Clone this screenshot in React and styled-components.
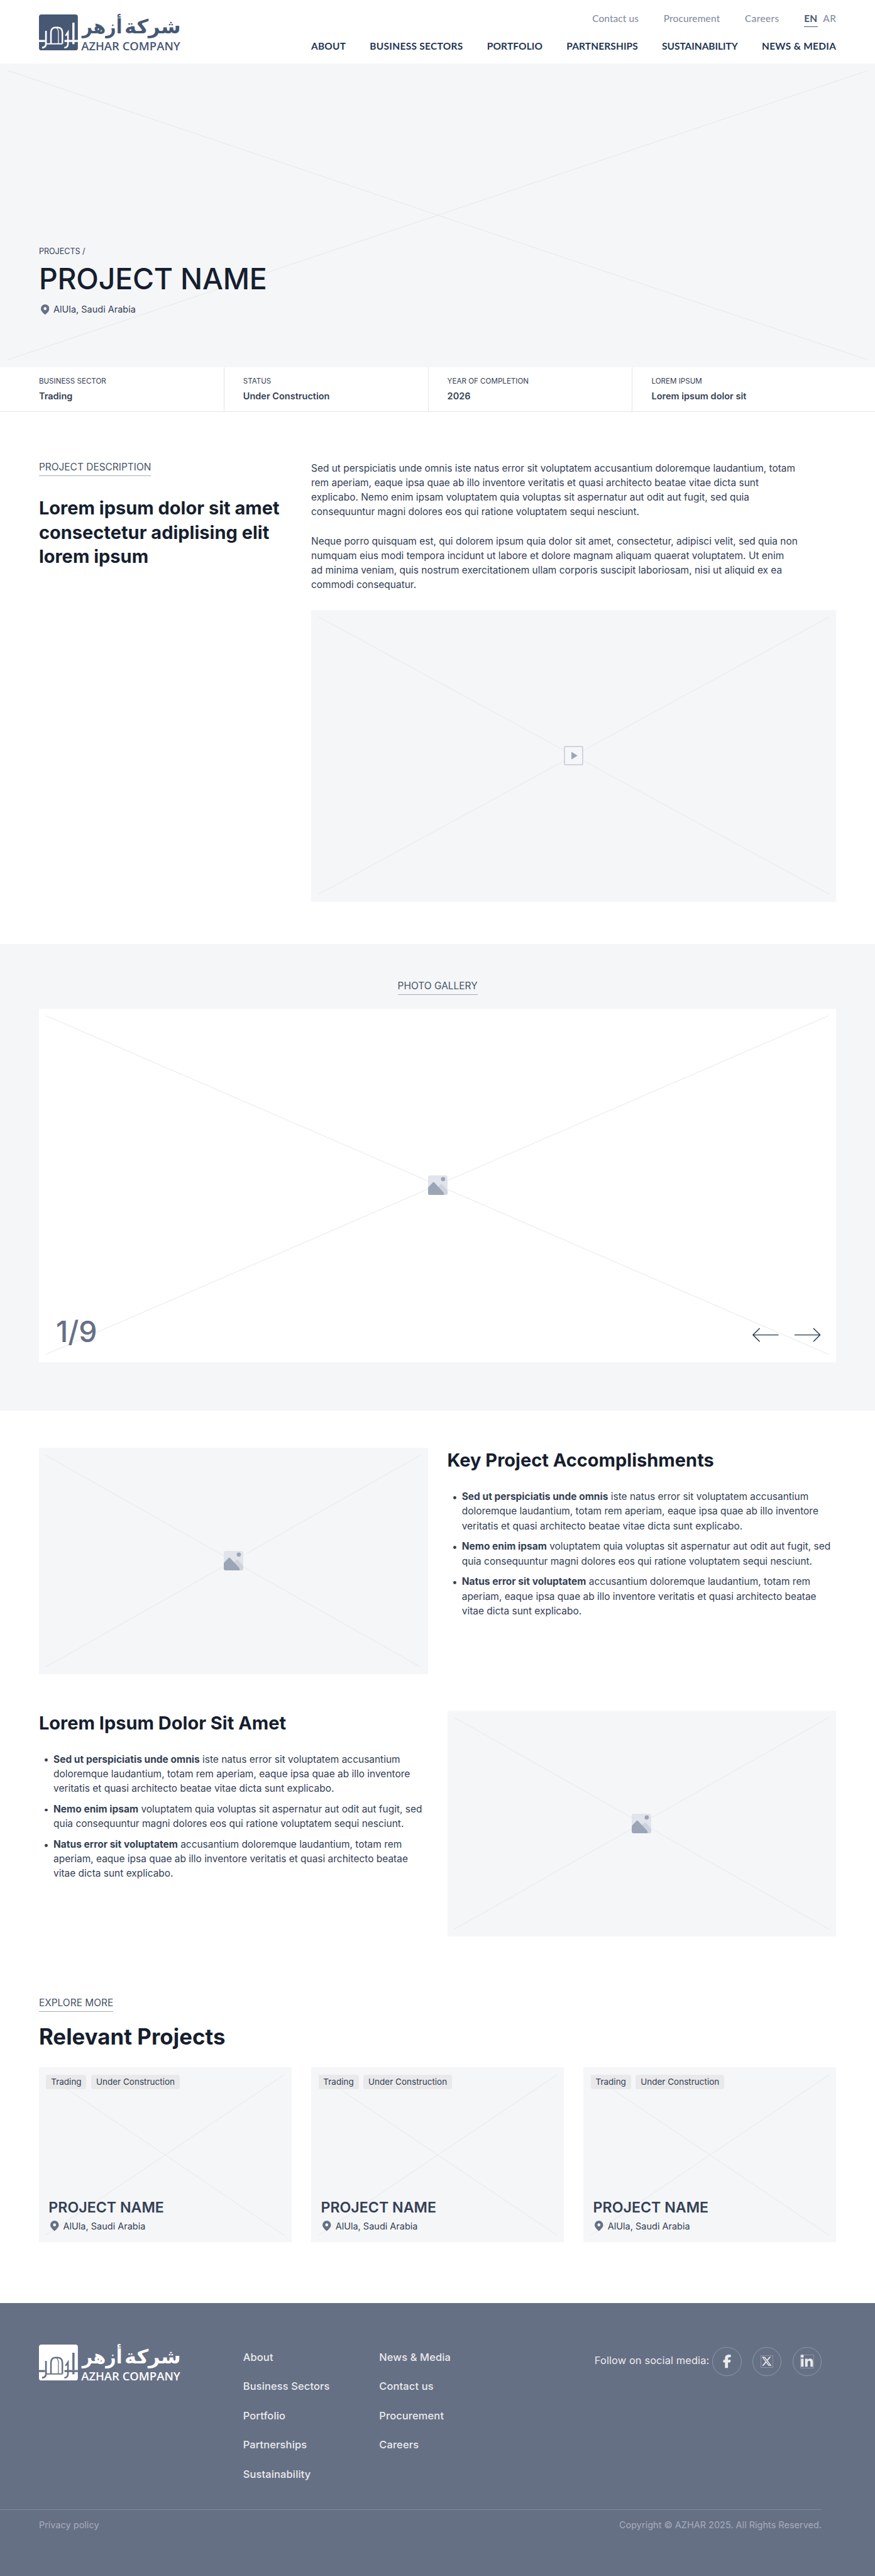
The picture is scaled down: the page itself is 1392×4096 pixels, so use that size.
import React from "react";
import styled, { createGlobalStyle, css } from "styled-components";
import { FaFacebookF, FaLinkedinIn, FaXTwitter } from "react-icons/fa6";

const GlobalStyle = createGlobalStyle`
  *, *::before, *::after { box-sizing: border-box; }
  html, body { overflow: hidden; }
  body { margin: 0; background: #fff; }
  h1, h2, h3, p, ul { margin: 0; padding: 0; }
  ul { list-style: none; }
  a { color: inherit; text-decoration: none; }
`;

/* The page is designed on a 1440px grid. */
const Page = styled.div`
  zoom: 0.9668;
  width: 1440px;
  background: #fff;
  color: #344054;
  font-family: Inter, "Liberation Sans", sans-serif;
  font-size: 16px;
  line-height: 24px;
  white-space: nowrap;
`;

/* Header */
const Header = styled.header`
  display: flex;
  justify-content: space-between;
  height: 104px;
  padding: 24px 64px 0;
`;
const LogoSvg = styled.svg`
  display: block;
  flex: none;
  width: 234px;
  height: 60px;
  overflow: visible;
`;
const ArabicWord = styled.text`
  font-family: "DejaVu Sans", sans-serif;
  font-size: 32px;
  font-weight: 700;
  direction: rtl;
`;
const LatinName = styled.text`
  font-family: "Open Sans", "Noto Sans", sans-serif;
  font-size: 19.1px;
  font-weight: 600;
`;
const Menus = styled.div`
  display: flex;
  flex-direction: column;
  align-items: flex-end;
  font-family: Lato, "Open Sans", sans-serif;
`;
const TopLinks = styled.nav`
  display: flex;
  gap: 41px;
  margin-top: -5px;
  color: #7b879d;
  font-size: 16px;
`;
const Languages = styled.div`
  display: flex;
  gap: 9px;
`;
const TopLink = styled.a`
  letter-spacing: ${(p) => p.$spacing || 0}px;
  ${(p) =>
    p.$active &&
    css`
      height: 25px;
      border-bottom: 1px solid #475874;
      color: #475874;
      font-weight: 700;
    `}
`;
const MainNav = styled.nav`
  display: flex;
  gap: 39.5px;
  margin-top: 20px;
`;
const NavLink = styled.a`
  color: #1f3654;
  font-size: 16px;
  font-weight: 700;
  letter-spacing: ${(p) => p.$spacing || 0}px;
`;

/* Placeholders */
const Frame = styled.div`
  position: relative;
  display: flex;
  align-items: center;
  justify-content: center;
  height: ${(p) => p.$height}px;
  background: ${(p) => (p.$white ? "#fff" : "#f5f6f8")};
`;
const CrossSvg = styled.svg`
  position: absolute;
  top: 12px;
  left: 12px;
  width: calc(100% - 24px);
  height: calc(100% - 24px);
  stroke: ${(p) => (p.$cool ? "#e5e7ec" : "#e6e7e9")};
`;
const Glyph = styled.svg`
  position: relative;
  display: block;
  width: 32px;
  height: 32px;
`;

/* Hero */
const Hero = styled.section`
  position: relative;
  display: flex;
  flex-direction: column;
  justify-content: flex-end;
  height: 500px;
  padding: 0 64px 85px;
  background: #f5f6f8;
`;
const Breadcrumb = styled.div`
  position: relative;
  font-size: 13px;
  line-height: 20px;
`;
const HeroTitle = styled.h1`
  position: relative;
  margin-top: 6px;
  color: #161e2e;
  font-size: 48px;
  font-weight: 500;
  line-height: 58px;
  letter-spacing: -0.2px;
`;
const Location = styled.div`
  position: relative;
  display: flex;
  align-items: center;
  gap: 7px;
  margin-top: ${(p) => p.$top}px;
  padding-left: 3px;
  font-size: 15px;
  line-height: 20px;
`;
const PinSvg = styled.svg`
  width: 14px;
  height: 17px;
`;

/* Facts bar */
const Facts = styled.section`
  display: flex;
  height: 74px;
  padding: 0 64px;
  border-bottom: 1px solid #e3e4e8;
`;
const Fact = styled.div`
  width: 336px;
  padding: 16px 0 0 31px;
  border-left: 1px solid #e3e4e8;
  &:first-child {
    width: 304px;
    padding-left: 0;
    border-left: 0;
  }
`;
const FactLabel = styled.div`
  font-size: 12px;
  line-height: 16px;
`;
const FactValue = styled.div`
  margin-top: 3px;
  font-size: 15px;
  font-weight: 600;
  line-height: 24px;
`;

/* Shared headings */
const SectionLabel = styled.div`
  width: max-content;
  height: 28px;
  border-bottom: 1px solid #a2adc0;
  color: #475467;
  line-height: 26px;
`;
const Heading = styled.h2`
  padding-top: 1px;
  color: #161e2e;
  font-size: ${(p) => (p.$large ? 36 : 30)}px;
  font-weight: 700;
  line-height: ${(p) => (p.$large ? 48 : 40)}px;
`;

/* Description */
const Description = styled.section`
  display: grid;
  grid-template-columns: 448px 864px;
  height: 875px;
  padding: 77px 64px 0;
`;
const Aside = styled.div`
  display: flex;
  flex-direction: column;
  gap: 32px;
`;
const Copy = styled.div`
  padding-top: 3px;
`;
const Paragraph = styled.p`
  margin-bottom: ${(p) => (p.$last ? 29 : 24)}px;
`;

/* Gallery */
const Gallery = styled.section`
  display: flex;
  flex-direction: column;
  align-items: center;
  gap: 23px;
  height: 767px;
  padding: 55px 64px 0;
  background: #f5f6f8;
`;
const Slide = styled.div`
  position: relative;
  width: 100%;
`;
const Counter = styled.div`
  position: absolute;
  left: 28px;
  bottom: 21px;
  color: #667085;
  font-size: 48px;
  font-weight: 500;
  line-height: 58px;
`;
const Arrows = styled.div`
  position: absolute;
  right: 26px;
  bottom: 32px;
  display: flex;
  gap: 26px;
`;
const ArrowSvg = styled.svg`
  width: 43px;
  height: 24px;
  fill: none;
  stroke: #22394a;
  stroke-width: 1.5;
  transform: ${(p) => (p.$flip ? "scaleX(-1)" : "none")};
`;

/* Highlights */
const Highlights = styled.section`
  display: flex;
  flex-direction: column;
  gap: 60px;
  padding: 61px 64px 0;
`;
const HighlightRow = styled.div`
  display: grid;
  grid-template-columns: 640px 640px;
  gap: 32px;
`;
const Bullets = styled.ul`
  display: flex;
  flex-direction: column;
  gap: 10px;
  margin-top: 27.5px;
`;
const Bullet = styled.li`
  display: flex;
  padding-left: 9px;
  &::before {
    content: "";
    flex: none;
    width: 5px;
    height: 5px;
    margin: 11px 9.5px 0 0.5px;
    border-radius: 50%;
    background: #344054;
  }
`;
const Strong = styled.strong`
  font-weight: 700;
  letter-spacing: 0.03px;
`;

/* Related projects */
const Related = styled.section`
  padding: 96px 64px 100px;
`;
const RelatedTitle = styled(Heading)`
  margin: 16px 0 26px;
  letter-spacing: 0.05px;
`;
const Cards = styled.div`
  display: grid;
  grid-template-columns: repeat(3, 416px);
  gap: 32px;
`;
const Card = styled.article`
  position: relative;
  display: flex;
  flex-direction: column;
  justify-content: space-between;
  height: 288px;
  padding: 12px 12px 17px;
  background: #f5f6f8;
`;
const Tags = styled.div`
  position: relative;
  display: flex;
  gap: 8px;
`;
const Tag = styled.span`
  padding: 0 8px;
  border-radius: 4px;
  background: #e9e9ea;
  font-size: 14px;
`;
const CardBody = styled.div`
  position: relative;
  padding-left: 4px;
`;
const CardTitle = styled.h3`
  font-size: 24px;
  font-weight: 600;
  line-height: 32px;
`;

/* Footer */
const FooterArea = styled.footer`
  height: 450px;
  background: #667085;
  color: #ebebec;
`;
const FooterTop = styled.div`
  display: flex;
  height: 339px;
  padding: 68px 88px 0 64px;
`;
const FooterLogo = styled.div`
  width: 336px;
`;
const FooterColumn = styled.nav`
  display: flex;
  flex-direction: column;
  gap: 24px;
  width: 224px;
  padding-top: 9.5px;
  font-size: 17px;
  font-weight: 500;
  letter-spacing: 0.15px;
`;
const Social = styled.div`
  display: flex;
  align-items: center;
  gap: 18px;
  height: 48px;
  margin: 4px 0 0 auto;
`;
const SocialLabel = styled.span`
  margin-right: -13px;
  padding-bottom: 2px;
  font-size: 17px;
  letter-spacing: 0.1px;
`;
const SocialLink = styled.a`
  display: flex;
  align-items: center;
  justify-content: center;
  width: 48px;
  height: 48px;
  border: 1px solid #8f98a8;
  border-radius: 50%;
  font-size: ${(p) => p.$size}px;
`;
const IconTile = styled.span`
  display: flex;
  align-items: center;
  justify-content: center;
  width: ${(p) => p.$size}px;
  height: ${(p) => p.$size}px;
  border: 1px solid rgba(255, 255, 255, 0.25);
`;
const FooterBottom = styled.div`
  display: flex;
  justify-content: space-between;
  width: 1352px;
  padding: 13px 0 0 64px;
  border-top: 1px solid #818a9c;
  color: #a5adbc;
  font-size: 15px;
`;

function Logo({ color, cut }) {
  return (
    <LogoSvg viewBox="0 0 234 60" fill={color}>
      <rect width="64" height="59" rx="4" />
      <g fill="none" stroke={cut}>
        <path d="M0 43.500h10M42 43.500h22" strokeWidth="3.4" />
        <path d="M11.500 27v21q0 6-6.500 6.700" strokeWidth="2.8" />
        <path d="M19.700 48V30q0-8 7-8.500h4.500q7.300.500 7.300 8.500v18" strokeWidth="2.6" />
        <path d="M29 22.500q3 2 3 7V48" strokeWidth="1.300" />
        <path d="M11.500 48.300h27" strokeWidth="2" />
        <path d="M43.700 35l4-6v19q0 6-6 6.700" strokeWidth="2.600" />
        <path d="M56.700 13.500V42M56.700 45v4" strokeWidth="3.600" />
      </g>
      <ArabicWord transform="translate(233.500 31) scale(1.04 1)">شركة</ArabicWord>
      <ArabicWord transform="translate(137 31) scale(0.920 1)">أزهر</ArabicWord>
      <LatinName x="69.500" y="59">
        AZHAR COMPANY
      </LatinName>
    </LogoSvg>
  );
}

function Cross({ cool }) {
  return (
    <CrossSvg $cool={cool}>
      <line x1="0" y1="0" x2="100%" y2="100%" />
      <line x1="0" y1="100%" x2="100%" y2="0" />
    </CrossSvg>
  );
}

function PictureIcon() {
  return (
    <Glyph viewBox="0 0 32 32">
      <rect width="32" height="32" rx="3" fill="#e1e4ea" />
      <path d="M17 19 20.500 15q1.500-1.500 3 0L32 24.500V29a3 3 0 0 1-3 3H24z" fill="#cfd3dd" />
      <path d="M0 20 8 11.500q1-1 2 0L25 27.500q1.200 1.500 1.200 4.500H3a3 3 0 0 1-3-3z" fill="#9ba5b7" />
      <circle cx="24.700" cy="6" r="3.500" fill="#9ba5b7" />
    </Glyph>
  );
}

function VideoIcon() {
  return (
    <Glyph viewBox="0 0 32 32">
      <rect x="1" y="1" width="30" height="30" rx="1.500" fill="#f5f6f8" stroke="#ced4de" strokeWidth="2" />
      <path d="M12.500 9.700 22.500 16l-10 6.300z" fill="#9ba5b7" />
    </Glyph>
  );
}

function Place({ top }) {
  return (
    <Location $top={top}>
      <PinSvg viewBox="0 0 14 17">
        <path
          fill="#667085"
          fillRule="evenodd"
          d="M7 0a7 7 0 0 1 7 7c0 4-4 7.500-7 10C4 14.500 0 11 0 7a7 7 0 0 1 7-7zm0 4.500a2.500 2.500 0 1 0 0 5 2.500 2.500 0 0 0 0-5z"
        />
      </PinSvg>
      AlUla, Saudi Arabia
    </Location>
  );
}

function Arrow({ flip }) {
  return (
    <ArrowSvg viewBox="0 0 43 24" $flip={flip}>
      <path d="M43 12H1M12 1 1 12l11 11" />
    </ArrowSvg>
  );
}

const navItems = [
  ["ABOUT", 0.18],
  ["BUSINESS SECTORS", 0.32],
  ["PORTFOLIO", 0.13],
  ["PARTNERSHIPS", 0.12],
  ["SUSTAINABILITY", -0.04],
  ["NEWS & MEDIA", 0.32],
];

const facts = [
  ["BUSINESS SECTOR", "Trading"],
  ["STATUS", "Under Construction"],
  ["YEAR OF COMPLETION", "2026"],
  ["LOREM IPSUM", "Lorem ipsum dolor sit"],
];

const footerColumns = [
  ["About", "Business Sectors", "Portfolio", "Partnerships", "Sustainability"],
  ["News & Media", "Contact us", "Procurement", "Careers"],
];

function HighlightText({ title }) {
  return (
    <div>
      <Heading>{title}</Heading>
      <Bullets>
        <Bullet>
          <div>
            <Strong>Sed ut perspiciatis unde omnis</Strong> iste natus error sit voluptatem accusantium
            <br />
            doloremque laudantium, totam rem aperiam, eaque ipsa quae ab illo inventore
            <br />
            veritatis et quasi architecto beatae vitae dicta sunt explicabo.
          </div>
        </Bullet>
        <Bullet>
          <div>
            <Strong>Nemo enim ipsam</Strong> voluptatem quia voluptas sit aspernatur aut odit aut fugit, sed
            <br />
            quia consequuntur magni dolores eos qui ratione voluptatem sequi nesciunt.
          </div>
        </Bullet>
        <Bullet>
          <div>
            <Strong>Natus error sit voluptatem</Strong> accusantium doloremque laudantium, totam rem
            <br />
            aperiam, eaque ipsa quae ab illo inventore veritatis et quasi architecto beatae
            <br />
            vitae dicta sunt explicabo.
          </div>
        </Bullet>
      </Bullets>
    </div>
  );
}

function PictureFrame({ height, white }) {
  return (
    <Frame $height={height} $white={white}>
      <Cross cool={white} />
      <PictureIcon />
    </Frame>
  );
}

export default function App() {
  return (
    <Page>
      <GlobalStyle />
      <Header>
        <Logo color="#475874" cut="#fff" />
        <Menus>
          <TopLinks>
            <TopLink href="#" $spacing={0.11}>Contact us</TopLink>
            <TopLink href="#" $spacing={0.2}>Procurement</TopLink>
            <TopLink href="#" $spacing={0.38}>Careers</TopLink>
            <Languages>
              <TopLink href="#" $active $spacing={0.3}>EN</TopLink>
              <TopLink href="#" $spacing={0.5}>AR</TopLink>
            </Languages>
          </TopLinks>
          <MainNav>
            {navItems.map(([label, spacing]) => (
              <NavLink href="#" key={label} $spacing={spacing}>
                {label}
              </NavLink>
            ))}
          </MainNav>
        </Menus>
      </Header>

      <Hero>
        <Cross />
        <Breadcrumb>PROJECTS /</Breadcrumb>
        <HeroTitle>PROJECT NAME</HeroTitle>
        <Place top={12} />
      </Hero>

      <Facts>
        {facts.map(([label, value]) => (
          <Fact key={label}>
            <FactLabel>{label}</FactLabel>
            <FactValue>{value}</FactValue>
          </Fact>
        ))}
      </Facts>

      <Description>
        <Aside>
          <SectionLabel>PROJECT DESCRIPTION</SectionLabel>
          <Heading>
            Lorem ipsum dolor sit amet
            <br />
            consectetur adiplising elit
            <br />
            lorem ipsum
          </Heading>
        </Aside>
        <Copy>
          <Paragraph>
            Sed ut perspiciatis unde omnis iste natus error sit voluptatem accusantium doloremque laudantium, totam
            <br />
            rem aperiam, eaque ipsa quae ab illo inventore veritatis et quasi architecto beatae vitae dicta sunt
            <br />
            explicabo. Nemo enim ipsam voluptatem quia voluptas sit aspernatur aut odit aut fugit, sed quia
            <br />
            consequuntur magni dolores eos qui ratione voluptatem sequi nesciunt.
          </Paragraph>
          <Paragraph $last>
            Neque porro quisquam est, qui dolorem ipsum quia dolor sit amet, consectetur, adipisci velit, sed quia non
            <br />
            numquam eius modi tempora incidunt ut labore et dolore magnam aliquam quaerat voluptatem. Ut enim
            <br />
            ad minima veniam, quis nostrum exercitationem ullam corporis suscipit laboriosam, nisi ut aliquid ex ea
            <br />
            commodi consequatur.
          </Paragraph>
          <Frame $height={480}>
            <Cross />
            <VideoIcon />
          </Frame>
        </Copy>
      </Description>

      <Gallery>
        <SectionLabel>PHOTO GALLERY</SectionLabel>
        <Slide>
          <PictureFrame height={581} white />
          <Counter>1/9</Counter>
          <Arrows>
            <Arrow />
            <Arrow flip />
          </Arrows>
        </Slide>
      </Gallery>

      <Highlights>
        <HighlightRow>
          <PictureFrame height={372} />
          <HighlightText title="Key Project Accomplishments" />
        </HighlightRow>
        <HighlightRow>
          <HighlightText title="Lorem Ipsum Dolor Sit Amet" />
          <PictureFrame height={372} />
        </HighlightRow>
      </Highlights>

      <Related>
        <SectionLabel>EXPLORE MORE</SectionLabel>
        <RelatedTitle $large>Relevant Projects</RelatedTitle>
        <Cards>
          {[1, 2, 3].map((id) => (
            <Card key={id}>
              <Cross />
              <Tags>
                <Tag>Trading</Tag>
                <Tag>Under Construction</Tag>
              </Tags>
              <CardBody>
                <CardTitle>PROJECT NAME</CardTitle>
                <Place top={4} />
              </CardBody>
            </Card>
          ))}
        </Cards>
      </Related>

      <FooterArea>
        <FooterTop>
          <FooterLogo>
            <Logo color="#fff" cut="#667085" />
          </FooterLogo>
          {footerColumns.map((links) => (
            <FooterColumn key={links[0]}>
              {links.map((link) => (
                <a href="#" key={link}>
                  {link}
                </a>
              ))}
            </FooterColumn>
          ))}
          <Social>
            <SocialLabel>Follow on social media:</SocialLabel>
            <SocialLink href="#" $size={22}>
              <FaFacebookF />
            </SocialLink>
            <SocialLink href="#" $size={22}>
              <IconTile $size={20}>
                <FaXTwitter />
              </IconTile>
            </SocialLink>
            <SocialLink href="#" $size={25}>
              <IconTile $size={22}>
                <FaLinkedinIn />
              </IconTile>
            </SocialLink>
          </Social>
        </FooterTop>
        <FooterBottom>
          <span>Privacy policy</span>
          <span>Copyright © AZHAR 2025. All Rights Reserved.</span>
        </FooterBottom>
      </FooterArea>
    </Page>
  );
}
